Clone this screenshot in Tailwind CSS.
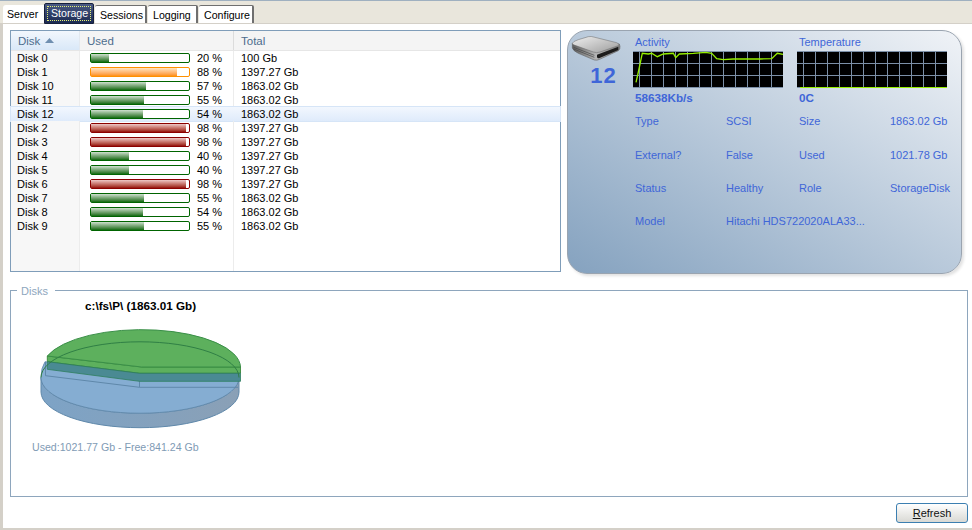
<!DOCTYPE html>
<html lang="en">
<head>
    <meta charset="UTF-8">
    <title>Storage</title>
    <script src="https://cdn.jsdelivr.net/npm/@tailwindcss/browser@4"></script>
</head>
<body class="bg-[#d4d0c8] w-[972px] h-[530px] overflow-hidden font-['Liberation_Sans',sans-serif] text-[11px] leading-[14px] text-black">
    <!-- Tabs -->
    <div class="h-[23px] pt-[1px] border-t border-[#9fb0c0] flex items-start bg-[#e9e6dc] text-[10.6px]">
        <div class="mt-[3px] ml-[3px] w-[41px] h-[18px] pl-[4px] flex items-center bg-white rounded-tl-[3px]">Server</div>
        <div class="mt-[1px] w-[50px] h-[21px] p-[2px] flex bg-gradient-to-b from-[#4a5a84] to-[#1c2a52] text-white border border-[#16203c] rounded-t-[2px]">
            <div class="w-full h-full pl-[3px] pb-[2px] flex items-center border border-dotted border-[#e3ef78]">Storage</div>
        </div>
        <div class="mt-[3px] ml-[1px] w-[52px] h-[18px] pl-[5px] flex items-center bg-white border-t border-r-2 border-[#6f6f6f] rounded-t-[2px]">Sessions</div>
        <div class="mt-[3px] ml-[1px] w-[50px] h-[18px] pl-[5px] flex items-center bg-white border-t border-r-2 border-[#6f6f6f] rounded-t-[2px]">Logging</div>
        <div class="mt-[3px] ml-[1px] w-[55px] h-[18px] pl-[5px] flex items-center bg-white border-t border-r-2 border-[#6f6f6f] rounded-t-[2px]">Configure</div>
    </div>

    <div class="ml-[3px] mt-[1px] h-[504px] bg-white pt-[6px] pl-[7px]">
        <div class="flex gap-[6px] items-start">
            <!-- Disk list -->
            <div class="w-[551px] h-[242px] border border-[#7f9db9] flex flex-col">
                <div class="h-[20px] shrink-0 flex text-[#4d6d8d] bg-[#f4f4f4] border-b border-[#e6e6e6] text-[11.5px]">
                    <div class="w-[69px] pl-[7px] flex items-center gap-[5px] bg-gradient-to-b from-[#f2f7fd] to-[#d9e8f8] border-r border-[#e2e8ef]">Disk
                        <svg width="9" height="5" viewBox="0 0 9 5"><path d="M0 5 L4.5 0 L9 5 Z" fill="#6f8fb0"/></svg>
                    </div>
                    <div class="w-[154px] pl-[7px] flex items-center border-r border-[#dcdcdc]">Used</div>
                    <div class="pl-[7px] flex items-center">Total</div>
                </div>

                <div class="h-[14px] flex items-center">
                    <div class="w-[69px] h-full pl-[6px] bg-[#f7f7f7] border-r border-[#ececec]">Disk 0</div>
                    <div class="w-[154px] h-full flex items-center pl-[10px] border-r border-[#ececec]">
                        <div class="w-[100px] h-[10px] border border-[#006400] rounded-[2px] bg-white"><div class="w-[18px] h-full bg-gradient-to-b from-[#cfe0cf] to-[#0b6b0b]"></div></div>
                        <span class="ml-[7px]">20 %</span>
                    </div>
                    <div class="pl-[7px]">100 Gb</div>
                </div>
                <div class="h-[14px] flex items-center">
                    <div class="w-[69px] h-full pl-[6px] bg-[#f7f7f7] border-r border-[#ececec]">Disk 1</div>
                    <div class="w-[154px] h-full flex items-center pl-[10px] border-r border-[#ececec]">
                        <div class="w-[100px] h-[10px] border border-[#ff9000] rounded-[2px] bg-white"><div class="w-[86px] h-full bg-gradient-to-b from-[#ffe3c0] to-[#ff9000]"></div></div>
                        <span class="ml-[7px]">88 %</span>
                    </div>
                    <div class="pl-[7px]">1397.27 Gb</div>
                </div>
                <div class="h-[14px] flex items-center">
                    <div class="w-[69px] h-full pl-[6px] bg-[#f7f7f7] border-r border-[#ececec]">Disk 10</div>
                    <div class="w-[154px] h-full flex items-center pl-[10px] border-r border-[#ececec]">
                        <div class="w-[100px] h-[10px] border border-[#006400] rounded-[2px] bg-white"><div class="w-[55px] h-full bg-gradient-to-b from-[#cfe0cf] to-[#0b6b0b]"></div></div>
                        <span class="ml-[7px]">57 %</span>
                    </div>
                    <div class="pl-[7px]">1863.02 Gb</div>
                </div>
                <div class="h-[14px] flex items-center">
                    <div class="w-[69px] h-full pl-[6px] bg-[#f7f7f7] border-r border-[#ececec]">Disk 11</div>
                    <div class="w-[154px] h-full flex items-center pl-[10px] border-r border-[#ececec]">
                        <div class="w-[100px] h-[10px] border border-[#006400] rounded-[2px] bg-white"><div class="w-[53px] h-full bg-gradient-to-b from-[#cfe0cf] to-[#0b6b0b]"></div></div>
                        <span class="ml-[7px]">55 %</span>
                    </div>
                    <div class="pl-[7px]">1863.02 Gb</div>
                </div>
                <!-- selected row -->
                <div class="h-[14px] flex items-center bg-gradient-to-b from-[#f2f7fe] to-[#dfebfb] outline outline-1 outline-[#d6e5f7]">
                    <div class="w-[69px] h-full pl-[6px]">Disk 12</div>
                    <div class="w-[154px] h-full flex items-center pl-[10px]">
                        <div class="w-[100px] h-[10px] border border-[#006400] rounded-[2px] bg-white"><div class="w-[52px] h-full bg-gradient-to-b from-[#cfe0cf] to-[#0b6b0b]"></div></div>
                        <span class="ml-[7px]">54 %</span>
                    </div>
                    <div class="pl-[7px]">1863.02 Gb</div>
                </div>
                <div class="h-[14px] flex items-center">
                    <div class="w-[69px] h-full pl-[6px] bg-[#f7f7f7] border-r border-[#ececec]">Disk 2</div>
                    <div class="w-[154px] h-full flex items-center pl-[10px] border-r border-[#ececec]">
                        <div class="w-[100px] h-[10px] border border-[#8b0000] rounded-[2px] bg-white"><div class="w-[95px] h-full bg-gradient-to-b from-[#edc8c8] to-[#950505]"></div></div>
                        <span class="ml-[7px]">98 %</span>
                    </div>
                    <div class="pl-[7px]">1397.27 Gb</div>
                </div>
                <div class="h-[14px] flex items-center">
                    <div class="w-[69px] h-full pl-[6px] bg-[#f7f7f7] border-r border-[#ececec]">Disk 3</div>
                    <div class="w-[154px] h-full flex items-center pl-[10px] border-r border-[#ececec]">
                        <div class="w-[100px] h-[10px] border border-[#8b0000] rounded-[2px] bg-white"><div class="w-[95px] h-full bg-gradient-to-b from-[#edc8c8] to-[#950505]"></div></div>
                        <span class="ml-[7px]">98 %</span>
                    </div>
                    <div class="pl-[7px]">1397.27 Gb</div>
                </div>
                <div class="h-[14px] flex items-center">
                    <div class="w-[69px] h-full pl-[6px] bg-[#f7f7f7] border-r border-[#ececec]">Disk 4</div>
                    <div class="w-[154px] h-full flex items-center pl-[10px] border-r border-[#ececec]">
                        <div class="w-[100px] h-[10px] border border-[#006400] rounded-[2px] bg-white"><div class="w-[38px] h-full bg-gradient-to-b from-[#cfe0cf] to-[#0b6b0b]"></div></div>
                        <span class="ml-[7px]">40 %</span>
                    </div>
                    <div class="pl-[7px]">1397.27 Gb</div>
                </div>
                <div class="h-[14px] flex items-center">
                    <div class="w-[69px] h-full pl-[6px] bg-[#f7f7f7] border-r border-[#ececec]">Disk 5</div>
                    <div class="w-[154px] h-full flex items-center pl-[10px] border-r border-[#ececec]">
                        <div class="w-[100px] h-[10px] border border-[#006400] rounded-[2px] bg-white"><div class="w-[38px] h-full bg-gradient-to-b from-[#cfe0cf] to-[#0b6b0b]"></div></div>
                        <span class="ml-[7px]">40 %</span>
                    </div>
                    <div class="pl-[7px]">1397.27 Gb</div>
                </div>
                <div class="h-[14px] flex items-center">
                    <div class="w-[69px] h-full pl-[6px] bg-[#f7f7f7] border-r border-[#ececec]">Disk 6</div>
                    <div class="w-[154px] h-full flex items-center pl-[10px] border-r border-[#ececec]">
                        <div class="w-[100px] h-[10px] border border-[#8b0000] rounded-[2px] bg-white"><div class="w-[95px] h-full bg-gradient-to-b from-[#edc8c8] to-[#950505]"></div></div>
                        <span class="ml-[7px]">98 %</span>
                    </div>
                    <div class="pl-[7px]">1397.27 Gb</div>
                </div>
                <div class="h-[14px] flex items-center">
                    <div class="w-[69px] h-full pl-[6px] bg-[#f7f7f7] border-r border-[#ececec]">Disk 7</div>
                    <div class="w-[154px] h-full flex items-center pl-[10px] border-r border-[#ececec]">
                        <div class="w-[100px] h-[10px] border border-[#006400] rounded-[2px] bg-white"><div class="w-[53px] h-full bg-gradient-to-b from-[#cfe0cf] to-[#0b6b0b]"></div></div>
                        <span class="ml-[7px]">55 %</span>
                    </div>
                    <div class="pl-[7px]">1863.02 Gb</div>
                </div>
                <div class="h-[14px] flex items-center">
                    <div class="w-[69px] h-full pl-[6px] bg-[#f7f7f7] border-r border-[#ececec]">Disk 8</div>
                    <div class="w-[154px] h-full flex items-center pl-[10px] border-r border-[#ececec]">
                        <div class="w-[100px] h-[10px] border border-[#006400] rounded-[2px] bg-white"><div class="w-[52px] h-full bg-gradient-to-b from-[#cfe0cf] to-[#0b6b0b]"></div></div>
                        <span class="ml-[7px]">54 %</span>
                    </div>
                    <div class="pl-[7px]">1863.02 Gb</div>
                </div>
                <div class="h-[14px] flex items-center">
                    <div class="w-[69px] h-full pl-[6px] bg-[#f7f7f7] border-r border-[#ececec]">Disk 9</div>
                    <div class="w-[154px] h-full flex items-center pl-[10px] border-r border-[#ececec]">
                        <div class="w-[100px] h-[10px] border border-[#006400] rounded-[2px] bg-white"><div class="w-[53px] h-full bg-gradient-to-b from-[#cfe0cf] to-[#0b6b0b]"></div></div>
                        <span class="ml-[7px]">55 %</span>
                    </div>
                    <div class="pl-[7px]">1863.02 Gb</div>
                </div>
                <!-- empty part of the columns -->
                <div class="flex-1 flex">
                    <div class="w-[69px] bg-[#f7f7f7] border-r border-[#ececec]"></div>
                    <div class="w-[154px] border-r border-[#ececec]"></div>
                </div>
            </div>

            <!-- Info panel -->
            <div class="w-[395px] h-[244px] rounded-[20px] border border-[#9aa4b0] bg-gradient-to-tr from-[#85a2bf] to-[#f0f3f7] shadow-[2px_2px_3px_rgba(0,0,0,0.12)] text-[#3f66d8] flex">
                <div class="w-[65px] shrink-0 flex flex-col items-center">
                    <svg class="mt-[1px] -ml-[9px]" width="56" height="36" viewBox="9 12 168 108">
                        <defs>
                            <linearGradient id="hdTop" x1="0" y1="0" x2="1" y2="1"><stop offset="0" stop-color="#efefef"/><stop offset="1" stop-color="#9c9c9c"/></linearGradient>
                            <linearGradient id="hdSide" x1="0" y1="0" x2="1" y2="0"><stop offset="0" stop-color="#5e5e5e"/><stop offset="0.5" stop-color="#b5b5b5"/><stop offset="1" stop-color="#808080"/></linearGradient>
                        </defs>
                        <path d="M22 46 L22 60 Q24 68 40 76 L88 96 Q96 98 104 94 L160 68 Q166 64 165 55 L163 48 Z" fill="url(#hdSide)" stroke="#555" stroke-width="1.5"/>
                        <path d="M22 46 Q24 40 40 35 L70 26 Q78 24 90 28 L155 44 Q166 48 160 53 L105 72 Q95 76 85 72 L30 52 Q22 50 22 46 Z" fill="url(#hdTop)" stroke="#666" stroke-width="1.5"/>
                        <path d="M96 80 L160 56 L160 66 L104 90 Q97 92 96 87 Z" fill="#1c1c1c"/>
                        <path d="M26 58 L88 82 M26 63 L88 88" stroke="#444" stroke-width="2" fill="none"/>
                    </svg>
                    <div class="-mt-[3px] ml-[6px] font-bold text-[22px] leading-[22px] tracking-[1px]">12</div>
                </div>
                <div class="flex-1">
                    <div class="flex gap-[14px] mt-[4px]">
                        <div class="w-[150px]">
                            <div class="pl-[2px] h-[16px]">Activity</div>
                            <svg class="block" width="150" height="37" viewBox="0 0 150 37">
                                <rect width="150" height="37" fill="#000"/>
                                <path d="M0 .5H150M0 12.5H150M0 24.5H150M0 36.5H150M6.5 0V37M18.5 0V37M30.5 0V37M42.5 0V37M54.5 0V37M66.5 0V37M78.5 0V37M90.5 0V37M102.5 0V37M114.5 0V37M126.5 0V37M138.5 0V37" stroke="#7c90a8" fill="none"/>
                                <polyline points="3,31.3 4.7,24 9.3,2.3 15.3,3 18.7,2.3 24.3,5.7 30.3,3 40.3,2.3 42.7,6.7 46.3,3 60.3,2.3 72.7,1.3 78.7,2.3 83.7,7.7 90.3,8.7 100.3,8 113.7,8 127,8 138.7,7.7 144.3,2.3 150,3.3" fill="none" stroke="#96f000" stroke-width="1.3"/>
                            </svg>
                            <div class="pl-[2px] mt-[3px] font-bold text-[11.7px]">58638Kb/s</div>
                        </div>
                        <div class="w-[150px]">
                            <div class="pl-[2px] h-[16px]">Temperature</div>
                            <svg class="block" width="150" height="37" viewBox="0 0 150 37">
                                <rect width="150" height="37" fill="#000"/>
                                <path d="M0 .5H150M0 12.5H150M0 24.5H150M0 36.5H150M6.5 0V37M18.5 0V37M30.5 0V37M42.5 0V37M54.5 0V37M66.5 0V37M78.5 0V37M90.5 0V37M102.5 0V37M114.5 0V37M126.5 0V37M138.5 0V37" stroke="#7c90a8" fill="none"/>
                                <path d="M3 36.5H150" fill="none" stroke="#96f000"/>
                            </svg>
                            <div class="pl-[2px] mt-[3px] font-bold text-[11.7px]">0C</div>
                        </div>
                    </div>
                    <div class="mt-[9.3px] pl-[2px] grid grid-cols-[91px_73px_91px_auto] auto-rows-[33.3px]">
                        <div>Type</div><div>SCSI</div><div>Size</div><div>1863.02 Gb</div>
                        <div>External?</div><div>False</div><div>Used</div><div>1021.78 Gb</div>
                        <div>Status</div><div>Healthy</div><div>Role</div><div>StorageDisk</div>
                        <div>Model</div><div class="col-span-3">Hitachi HDS722020ALA33...</div>
                    </div>
                </div>
            </div>
        </div>

        <!-- Disks group -->
        <div class="relative mt-[16px] w-[958px] h-[207px] border border-[#8ea6bd]">
            <div class="absolute -top-[7px] left-[6px] px-[4px] w-[38px] bg-white text-[#8ea6bd] text-[11px]">Disks</div>
            <div class="ml-[74px] mt-[8px] font-bold text-[11.7px]">c:\fs\P\ (1863.01 Gb)</div>
            <svg class="block ml-[19px] mt-[7px]" width="220" height="115" viewBox="30 320 220 115">
                <defs>
                    <linearGradient id="pieSide" x1="0" y1="0" x2="1" y2="0"><stop offset="0" stop-color="#7da3c6"/><stop offset="1" stop-color="#8aa0b6"/></linearGradient>
                </defs>
                <path d="M41 377.5 A99 35.7 0 0 0 239 377.5 L239 392 A99 35.7 0 0 1 41 392 Z" fill="url(#pieSide)" stroke="#5f88aa"/>
                <path d="M45 361.7 L139.5 373.3 L239 373.3 L239 377.5 A99 35.7 0 0 1 41 377.5 Q41 368 45 361.7 Z" fill="#85add2" stroke="#5f88aa" stroke-width="0.8"/>
                <path d="M45.5 375.7 L139.5 387.3 L238 387.3 M139.5 373 V387.3 M45.5 362 V375.7" fill="none" stroke="#5f88aa"/>
                <path d="M47.3 356 L141.7 367 L240.5 367 L240.5 373.3 L139.5 373.3 L47.3 361.7 Z" fill="#5db05d" stroke="#2d7d2d" stroke-width="0.8"/>
                <path d="M47.3 361.7 L139.5 373.3 L240.5 373.3 L240.5 381.3 L139.5 381.3 L47.3 369.3 Z" fill="#4a8a93" stroke="#2d7d5d" stroke-width="0.8"/>
                <path d="M47.3 356 A99 38 0 0 1 240.5 367 L141.7 367 Z" fill="#5db05d" stroke="#3a8f48"/>
                <path d="M41 377.5 A99 35.7 0 0 1 239 377.5" fill="none" stroke="#2f7f45"/>
            </svg>
            <div class="ml-[21px] mt-[5px] text-[#7f9bb5] text-[10.6px]">Used:1021.77 Gb - Free:841.24 Gb</div>
        </div>

        <div class="mt-[6px] w-[958px] flex justify-end">
            <button class="w-[72px] h-[20px] border border-[#3c7fb1] rounded-[3px] bg-gradient-to-b from-white to-[#d9d9d4] text-[#111] text-[11px]"><u>R</u>efresh</button>
        </div>
    </div>
</body>
</html>
